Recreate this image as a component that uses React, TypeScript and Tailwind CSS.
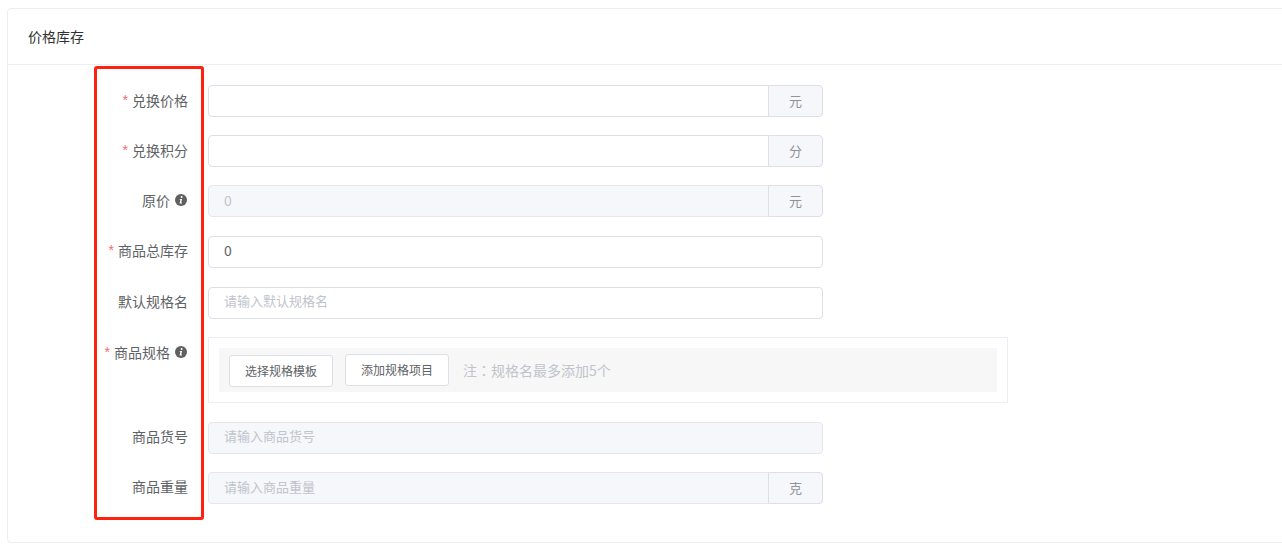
const font = { fontFamily: '"Noto Sans CJK SC", "Liberation Sans", sans-serif' };

function Info() {
  return (
    <svg width="12" height="12" viewBox="0 0 12 12" className="ml-[5px] shrink-0">
      <circle cx="6" cy="6" r="6" fill="#5f5f5f" />
      <circle cx="6.6" cy="3.1" r="1" fill="#fff" />
      <path d="M4.8 5h2.3L6.2 8.6h.9l-.2.8H4.5l.9-3.6h-.8z" fill="#fff" />
    </svg>
  );
}

function Label({ text, required, info, up }: { text: string; required?: boolean; info?: boolean; up?: boolean }) {
  return (
    <div
      className={`w-[200px] shrink-0 h-[32px] flex items-center justify-end text-[14px] text-[#606266] ${up ? "pb-[4px]" : "pb-[2px]"} ${
        info ? "pr-[21px]" : "pr-[20px]"
      }`}
    >
      {required && <span className="text-[#f56c6c] mr-[4px] text-[14px] leading-none font-['Liberation_Sans']">*</span>}
      <span>{text}</span>
      {info && <Info />}
    </div>
  );
}

function Field({
  placeholder,
  value,
  suffix,
  disabled,
  up,
}: {
  placeholder?: string;
  value?: string;
  suffix?: string;
  disabled?: boolean;
  up?: boolean;
}) {
  return (
    <div className="flex w-[615px] h-[32px] text-[13px]">
      <div
        className={`flex-1 flex items-center pl-[15px] border border-[#dcdfe6] ${up ? "pb-[4px]" : "pb-[2px]"} ${suffix ? "rounded-l-[4px]" : "rounded-[4px]"} ${
          disabled ? "bg-[#f5f7fa] border-[#e4e7ed] text-[#c0c4cc]" : "bg-white text-[#606266]"
        }`}
      >
        {value ? <span className="text-[14px]">{value}</span> : <span className="text-[#c0c4cc]">{placeholder}</span>}
      </div>
      {suffix && (
        <div className="w-[55px] -ml-px flex items-center justify-center pb-[1px] bg-[#f5f7fa] border border-[#dcdfe6] rounded-r-[4px] text-[#909399]">
          {suffix}
        </div>
      )}
    </div>
  );
}

export default function App() {
  return (
    <div className="w-[1282px] h-[551px] overflow-hidden bg-white pl-[7px] pt-[8px]" style={font}>
      <div className="relative w-[1300px] h-[535px] bg-white border border-[#ebeef5] rounded-[4px]">
        <div className="h-[56px] flex items-center pl-[20px] border-b border-[#ebeef5] text-[14px] text-[#303133]">
          价格库存
        </div>
        <div className="pt-[20px] flex flex-col">
          <div className="flex">
            <Label text="兑换价格" required />
            <Field suffix="元" />
          </div>
          <div className="flex mt-[18px]">
            <Label text="兑换积分" required />
            <Field suffix="分" />
          </div>
          <div className="flex mt-[18px]">
            <Label text="原价" info />
            <Field value="0" suffix="元" disabled />
          </div>
          <div className="flex mt-[19px]">
            <Label text="商品总库存" required up />
            <Field value="0" up />
          </div>
          <div className="flex mt-[19px]">
            <Label text="默认规格名" up />
            <Field placeholder="请输入默认规格名" up />
          </div>
          <div className="flex mt-[18px]">
            <Label text="商品规格" required info />
            <div className="w-[800px] h-[66px] border border-[#ebeef5] p-[10px]">
              <div className="h-[44px] bg-[#f7f7f7] flex items-start pl-[10px] pt-[6px]">
                <div className="w-[104px] h-[32px] mt-px pb-[1px] bg-white border border-[#dcdfe6] rounded-[3px] flex items-center justify-center text-[12px] text-[#606266]">
                  选择规格模板
                </div>
                <div className="w-[104px] h-[32px] ml-[12px] pb-[1px] bg-white border border-[#dcdfe6] rounded-[3px] flex items-center justify-center text-[12px] text-[#606266]">
                  添加规格项目
                </div>
                <div className="ml-[14px] h-[32px] pt-[1px] flex items-center text-[14px] text-[#c0c4cc]">
                  注<span className="font-['Noto_Sans_CJK_TC']">：</span>规格名最多添加5个
                </div>
              </div>
            </div>
          </div>
          <div className="flex mt-[19px]">
            <Label text="商品货号" up />
            <Field placeholder="请输入商品货号" disabled up />
          </div>
          <div className="flex mt-[18px]">
            <Label text="商品重量" up />
            <Field placeholder="请输入商品重量" suffix="克" disabled />
          </div>
        </div>
        <div className="absolute left-[86px] top-[57px] w-[110px] h-[454px] border-[3px] border-[#ff2010] rounded-[3px] pointer-events-none" />
      </div>
    </div>
  );
}
